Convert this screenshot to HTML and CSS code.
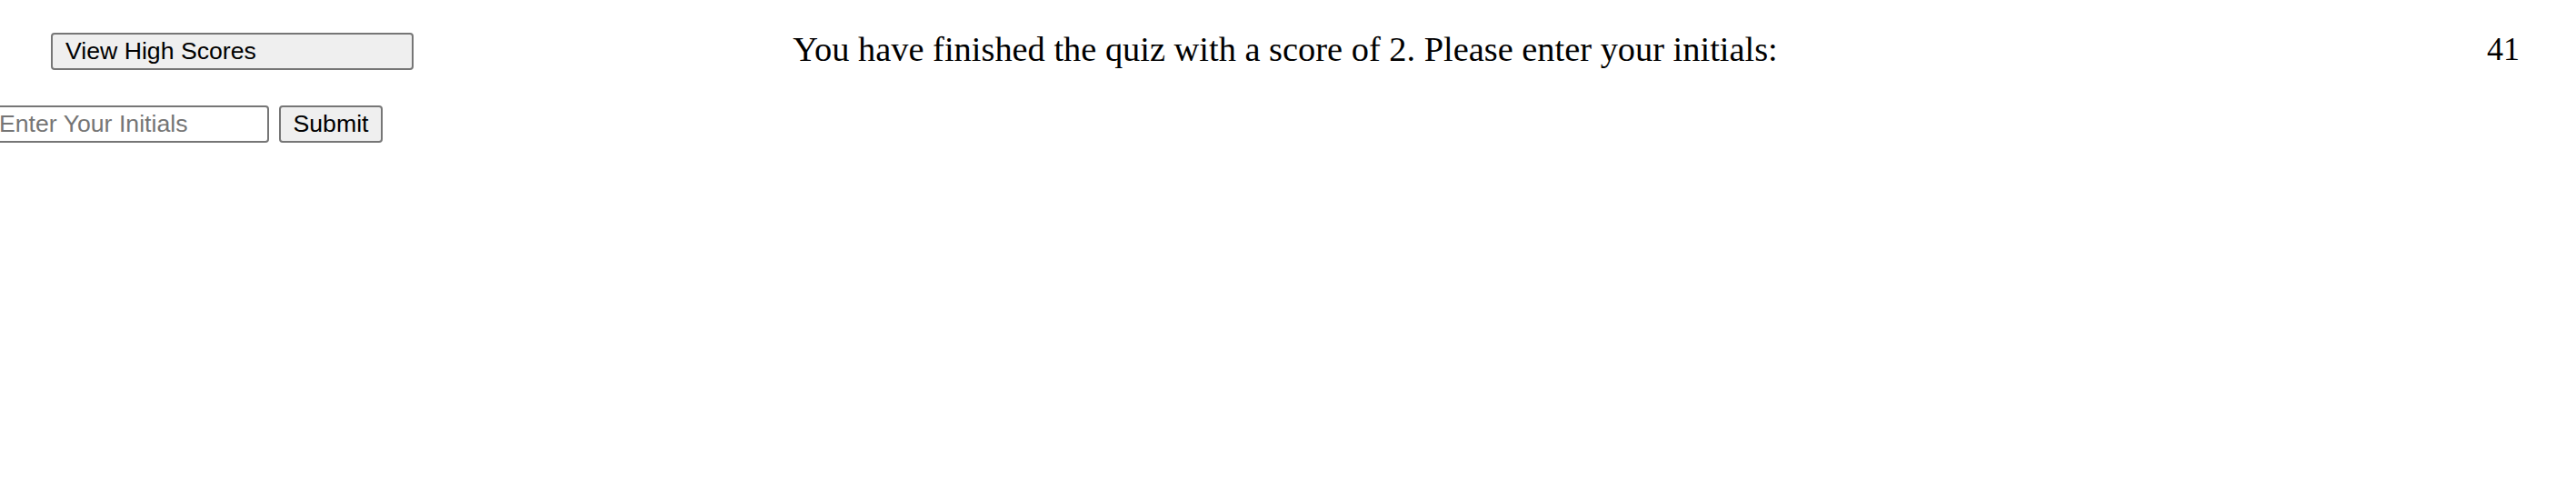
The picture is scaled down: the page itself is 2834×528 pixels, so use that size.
FILE: index.html
```html
<!DOCTYPE html>
<html>
<head>
<meta charset="utf-8">
<link rel="stylesheet" href="styles.css">
</head>
<body>
<header class="top">
  <div class="left"><button class="hs-btn">View High Scores</button></div>
  <h1 class="msg">You have finished the quiz with a score of 2. Please enter your initials:</h1>
  <div class="right"><span class="timer">41</span></div>
</header>
<form class="entry">
  <input class="initials" type="text" placeholder="Enter Your Initials">
  <button class="submit" type="button">Submit</button>
</form>
</body>
</html>
```
FILE: styles.css
```css
html, body {
  margin: 0;
  padding: 0;
  background: #fff;
}
body {
  font-family: "Liberation Serif", "Times New Roman", serif;
  color: #000;
}
.top {
  display: grid;
  grid-template-columns: 1fr auto 1fr;
  align-items: center;
  padding: 36px 62px 0 56px;
}
.left {
  justify-self: start;
}
.right {
  justify-self: end;
  padding-bottom: 4px;
}
.hs-btn {
  width: 399px;
  height: 41px;
  text-align: left;
  padding: 0 0 0 14px;
  font-family: "Liberation Sans", Arial, sans-serif;
  font-size: 26.67px;
  color: #000;
  background: #efefef;
  border: 2px solid #767676;
  border-radius: 4px;
  display: block;
}
.msg {
  margin: 0;
  padding-bottom: 4px;
  font-weight: normal;
  font-size: 38.4px;
  line-height: 37px;
  text-align: center;
}
.timer {
  display: block;
  font-size: 36px;
  line-height: 37px;
}
.entry {
  display: flex;
  align-items: center;
  gap: 11px;
  margin: 39px 0 0 -7px;
}
.initials {
  width: 303px;
  height: 41px;
  box-sizing: border-box;
  padding: 0 4px;
  font-family: "Liberation Sans", Arial, sans-serif;
  font-size: 26.67px;
  border: 2px solid #767676;
  border-radius: 4px;
  color: #000;
}
.initials::placeholder {
  color: #757575;
}
.submit {
  width: 114px;
  height: 41px;
  padding: 0;
  font-family: "Liberation Sans", Arial, sans-serif;
  font-size: 26.67px;
  color: #000;
  background: #efefef;
  border: 2px solid #767676;
  border-radius: 4px;
}
```
